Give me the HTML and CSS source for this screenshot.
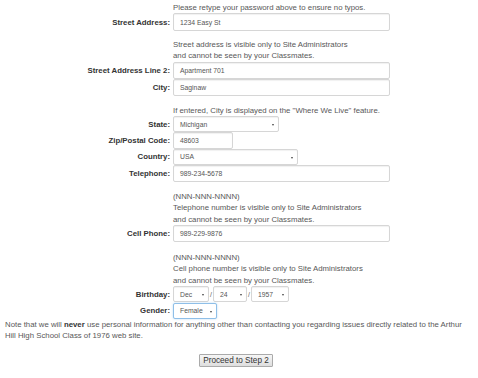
FILE: index.html
```html
<!DOCTYPE html>
<html>
<head>
<meta charset="utf-8">
<link rel="stylesheet" href="styles.css">
</head>
<body>
<div class="form">
  <div class="row hint h1"><span class="lbl"></span><div class="fld">Please retype your password above to ensure no typos.</div></div>
  <div class="row r-in"><span class="lbl">Street Address:</span><div class="fld"><span class="input w-full tall">1234 Easy St</span></div></div>
  <div class="row hint h2"><span class="lbl"></span><div class="fld">Street address is visible only to Site Administrators<br>and cannot be seen by your Classmates.</div></div>
  <div class="row r-in"><span class="lbl">Street Address Line 2:</span><div class="fld"><span class="input w-full">Apartment 701</span></div></div>
  <div class="row r-in"><span class="lbl">City:</span><div class="fld"><span class="input w-full">Saginaw</span></div></div>
  <div class="row hint h3"><span class="lbl"></span><div class="fld">If entered, City is displayed on the "Where We Live" feature.</div></div>
  <div class="row r-sel"><span class="lbl">State:</span><div class="fld"><span class="select w-state">Michigan<i class="arr"></i></span></div></div>
  <div class="row r-sel"><span class="lbl">Zip/Postal Code:</span><div class="fld"><span class="input w-zip">48603</span></div></div>
  <div class="row r-sel"><span class="lbl">Country:</span><div class="fld"><span class="select w-country">USA<i class="arr"></i></span></div></div>
  <div class="row r-in"><span class="lbl">Telephone:</span><div class="fld"><span class="input w-full">989-234-5678</span></div></div>
  <div class="row hint h4"><span class="lbl"></span><div class="fld">(NNN-NNN-NNNN)<br>Telephone number is visible only to Site Administrators<br>and cannot be seen by your Classmates.</div></div>
  <div class="row r-in"><span class="lbl">Cell Phone:</span><div class="fld"><span class="input w-full">989-229-9876</span></div></div>
  <div class="row hint h5"><span class="lbl"></span><div class="fld">(NNN-NNN-NNNN)<br>Cell phone number is visible only to Site Administrators<br>and cannot be seen by your Classmates.</div></div>
  <div class="row r-sel"><span class="lbl">Birthday:</span><div class="fld bday"><span class="select w-mon">Dec<i class="arr"></i></span><span class="slash">/</span><span class="select w-day">24<i class="arr"></i></span><span class="slash">/</span><span class="select w-year">1957<i class="arr"></i></span></div></div>
  <div class="row r-sel"><span class="lbl">Gender:</span><div class="fld"><span class="select w-gender focus">Female<i class="arr"></i></span></div></div>
</div>
<p class="note">Note that we will <b>never</b> use personal information for anything other than contacting you regarding issues directly related to the Arthur Hill High School Class of 1976 web site.</p>
<div class="actions"><span class="button">Proceed to Step 2</span></div>
</body>
</html>
```
FILE: styles.css
```css
html, body { margin: 0; padding: 0; background: #fff; }
body {
  font-family: "Liberation Sans", Arial, sans-serif;
  font-size: 7.8px;
  color: #585858;
  width: 478px;
  height: 378px;
  overflow: hidden;
}
.form { padding-top: 2px; }
.row { display: flex; align-items: center; }
.lbl {
  flex: none;
  text-align: right;
  font-weight: bold;
  color: #333;
  padding-right: 3px;
  box-sizing: border-box;
  width: 173px;
}
.fld { display: flex; align-items: center; }
.hint .fld { display: block; line-height: 11.5px; }
.h1 { height: 11.5px; }
.h2 { padding-top: 8px; }
.h3 { padding-top: 9px; }
.h3 .fld { line-height: 10.5px; padding-top: 1px; }
.h4 { padding-top: 8.5px; }
.h5 { padding-top: 9.5px; }
.r-in { height: 17px; }
.r-sel { height: 16.4px; }
.input, .select {
  display: flex;
  align-items: center;
  box-sizing: border-box;
  height: 17px;
  border: 1px solid #d6d6d6;
  border-radius: 2px;
  box-shadow: inset 0 1px 1px rgba(0,0,0,0.06);
  padding-left: 6px;
  font-size: 6.8px;
  color: #555;
  background: #fff;
  position: relative;
}
.input.tall { height: 18px; }
.select { height: 16px; }
.w-full { width: 217px; }
.w-zip { width: 60px; }
.w-state { width: 106px; }
.w-country { width: 125px; }
.w-mon { width: 36px; }
.w-day { width: 34px; }
.w-year { width: 38px; }
.w-gender { width: 44px; }
.arr {
  position: absolute;
  right: 4px;
  top: 7px;
  width: 0; height: 0;
  border-left: 1.5px solid transparent;
  border-right: 1.5px solid transparent;
  border-top: 2.5px solid #444;
}
.slash { width: 5px; text-align: center; font-size: 7px; margin: 0 -0.5px; }
.focus {
  border-color: #8fbfe8;
  box-shadow: 0 0 2px rgba(102,175,233,0.5);
}
.note {
  margin: 0;
  padding: 0 5px;
  line-height: 11.5px;
}
.note b { color: #333; }
.actions {
  display: flex;
  justify-content: center;
  padding-right: 6px;
  padding-top: 12px;
}
.button {
  display: inline-block;
  box-sizing: border-box;
  height: 13px;
  line-height: 11px;
  padding: 0 3px;
  border: 1px solid #aaa;
  border-radius: 1px;
  background: linear-gradient(#f6f6f6, #dedede);
  color: #333;
  font-size: 8.2px;
}
```
